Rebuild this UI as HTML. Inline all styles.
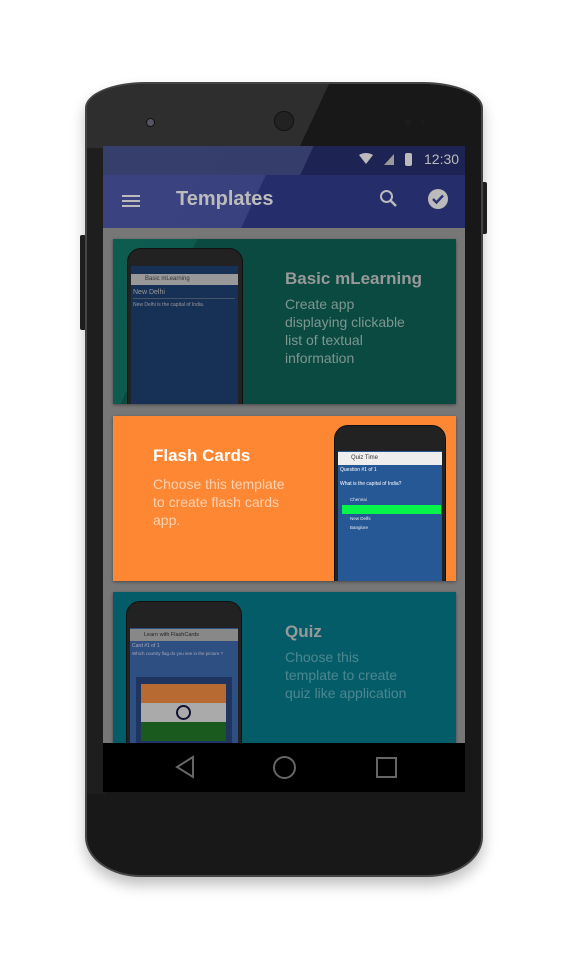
<!DOCTYPE html>
<html><head><meta charset="utf-8"><style>
*{margin:0;padding:0;box-sizing:border-box}
body{width:568px;height:960px;background:#fff;position:relative;overflow:hidden;font-family:"Liberation Sans",sans-serif}
.abs{position:absolute}
.phone{left:85px;top:82px;width:398px;height:795px;background:#181818;border-radius:60px 60px 56px 56px/26px 26px 40px 40px;box-shadow:0 8px 14px rgba(0,0,0,.25);border:2px solid #444;overflow:hidden}
.screen{left:103px;top:146px;width:362px;height:646px;background:#777;overflow:hidden}
.card{position:absolute;left:10px;width:343px;overflow:hidden;box-shadow:0 1px 3px rgba(0,0,0,.4)}
.mini{position:absolute;background:#222;border-radius:14px 14px 0 0;border:1px solid #111}
.msc{position:absolute;background:#1e3b66}
</style></head><body>
<div class="abs" style="left:80px;top:235px;width:6px;height:95px;background:#222;border-radius:2px"></div>
<div class="abs" style="left:481px;top:182px;width:6px;height:52px;background:#222;border-radius:2px"></div>
<div class="abs phone"><div class="abs" style="left:0;top:0;width:398px;height:795px;background:#2e2e2e;clip-path:polygon(0 0,242px 0,212px 64px,0 64px)"></div><div class="abs" style="left:0;top:64px;width:18px;height:646px;background:#1e1e1e"></div></div>
<div class="abs" style="left:147px;top:119px;width:7px;height:7px;border-radius:50%;background:#556;box-shadow:0 0 0 1px #111"></div>
<div class="abs" style="left:274px;top:111px;width:20px;height:20px;border-radius:50%;background:#222;border:1px solid #111"></div>
<div class="abs" style="left:405px;top:119px;width:6px;height:6px;border-radius:50%;background:#1c1c1c"></div>
<div class="abs" style="left:421px;top:119px;width:4px;height:4px;border-radius:50%;background:#1c1c1c"></div>

<div class="abs screen">
 <div class="abs" style="left:0;top:0;width:362px;height:29px;background:linear-gradient(115deg,#363e6c 0%,#353d6b 56%,#1d2352 56.2%,#1d2352 100%)"></div>
 <svg class="abs" style="left:255px;top:6px" width="20" height="16"><path d="M1 3 Q8 -1 15 3 L8 12Z" fill="#bbb"/></svg>
 <svg class="abs" style="left:279px;top:5px" width="14" height="16"><path d="M2 14 L12 3 L12 14Z" fill="#999"/></svg>
 <div class="abs" style="left:302px;top:7px;width:7px;height:13px;background:#bbb;border-radius:2px"></div>
 <div class="abs" style="left:321px;top:5px;color:#bbb;font-size:14px">12:30</div>
 <div class="abs" style="left:0;top:29px;width:362px;height:53px;background:linear-gradient(115deg,#3a4380 0%,#39417e 42%,#262d6b 42.2%,#262d6b 100%)"></div>
 <div class="abs" style="left:19px;top:49px;width:18px;height:2px;background:#bbb;box-shadow:0 5px 0 #bbb,0 10px 0 #bbb"></div>
 <div class="abs" style="left:73px;top:42px;color:#bbb;font-size:20px;font-weight:bold">Templates</div>
 <svg class="abs" style="left:276px;top:43px" width="20" height="20"><circle cx="7.5" cy="7.5" r="5.5" fill="none" stroke="#bbb" stroke-width="2"/><path d="M11.5 11.5 L17 17" stroke="#bbb" stroke-width="2.5"/></svg>
 <svg class="abs" style="left:324px;top:42px" width="22" height="22"><circle cx="11" cy="11" r="10" fill="#bbb"/><path d="M6 11 L9.5 14.5 L16 7.5" fill="none" stroke="#2a3170" stroke-width="2.4"/></svg>

 <div class="card" style="top:93px;height:165px;background:linear-gradient(115deg,#0d5c50 0%,#0d5a4f 20%,#0a4a41 20.2%,#0a4a41 100%)">
  <div class="mini" style="left:14px;top:9px;width:116px;height:170px"></div>
  <div class="msc" style="left:18px;top:27px;width:107px;height:140px;background:#163056"></div>
  <div class="abs" style="left:18px;top:35px;width:107px;height:11px;background:#999;font-size:6px;color:#333;padding:2px 0 0 14px">Basic mLearning</div>
  <div class="abs" style="left:20px;top:50px;color:#999;font-size:7px">New Delhi</div>
  <div class="abs" style="left:20px;top:59px;width:102px;height:1px;background:#456"></div>
  <div class="abs" style="left:20px;top:63px;color:#999;font-size:5px">New Delhi is the capital of India.</div>
  <div class="abs" style="left:172px;top:30px;color:#999;font-size:17px;font-weight:bold">Basic mLearning</div>
  <div class="abs" style="left:172px;top:56px;color:#7d9690;font-size:14px;line-height:18px">Create app<br>displaying clickable<br>list of textual<br>information</div>
 </div>

 <div class="card" style="top:270px;height:165px;background:#fd8733">
  <div class="mini" style="left:221px;top:9px;width:112px;height:170px"></div>
  <div class="msc" style="left:225px;top:35px;width:104px;height:140px;background:#265896"></div>
  <div class="abs" style="left:225px;top:36px;width:104px;height:13px;background:#eee;font-size:6px;color:#333;padding:3px 0 0 13px">Quiz Time</div>
  <div class="abs" style="left:227px;top:51px;color:#fff;font-size:5px">Question #1 of 1</div>
  <div class="abs" style="left:227px;top:65px;color:#fff;font-size:5px">What is the capital of India?</div>
  <div class="abs" style="left:237px;top:79px;color:#eee;font-size:4.5px;line-height:9.4px">Chennai<br>Mumbai<br>New Delhi<br>Banglore</div>
  <div class="abs" style="left:229px;top:89px;width:99px;height:9px;background:#07f54b"></div>
  <div class="abs" style="left:40px;top:30px;color:#fff;font-size:17px;font-weight:bold">Flash Cards</div>
  <div class="abs" style="left:40px;top:59px;color:#fdd3b4;font-size:14px;line-height:18px">Choose this template<br>to create flash cards<br>app.</div>
 </div>

 <div class="card" style="top:446px;height:160px;background:#045c69">
  <div class="mini" style="left:13px;top:9px;width:116px;height:170px"></div>
  <div class="msc" style="left:17px;top:36px;width:108px;height:140px;background:#2d4f82"></div>
  <div class="abs" style="left:17px;top:37px;width:108px;height:12px;background:#888;font-size:5.5px;color:#222;padding:3px 0 0 14px">Learn with FlashCards</div>
  <div class="abs" style="left:19px;top:51px;color:#aab;font-size:5px">Card #1 of 1</div>
  <div class="abs" style="left:19px;top:59px;color:#aab;font-size:4.5px">Which country flag do you see in the picture ?</div>
  <div class="abs" style="left:23px;top:85px;width:96px;height:80px;background:#1f3560"></div>
  <div class="abs" style="left:28px;top:92px;width:85px;height:19px;background:#b86a33"></div>
  <div class="abs" style="left:28px;top:111px;width:85px;height:19px;background:#aaa"></div>
  <div class="abs" style="left:28px;top:130px;width:85px;height:19px;background:#1a5a1e"></div>
  <div class="abs" style="left:63px;top:113px;width:15px;height:15px;border-radius:50%;border:2px solid #113"></div>
  <div class="abs" style="left:172px;top:30px;color:#999;font-size:17px;font-weight:bold">Quiz</div>
  <div class="abs" style="left:172px;top:56px;color:#4c8790;font-size:14px;line-height:18px">Choose this<br>template to create<br>quiz like application</div>
 </div>

 <div class="abs" style="left:0;top:597px;width:362px;height:49px;background:#000"></div>
 <svg class="abs" style="left:70px;top:608px" width="24" height="26"><path d="M20 3 L4 13 L20 23Z" fill="none" stroke="#666" stroke-width="2"/></svg>
 <div class="abs" style="left:170px;top:610px;width:23px;height:23px;border-radius:50%;border:2px solid #666"></div>
 <div class="abs" style="left:273px;top:611px;width:21px;height:21px;border:2px solid #666"></div>
</div>
</body></html>
